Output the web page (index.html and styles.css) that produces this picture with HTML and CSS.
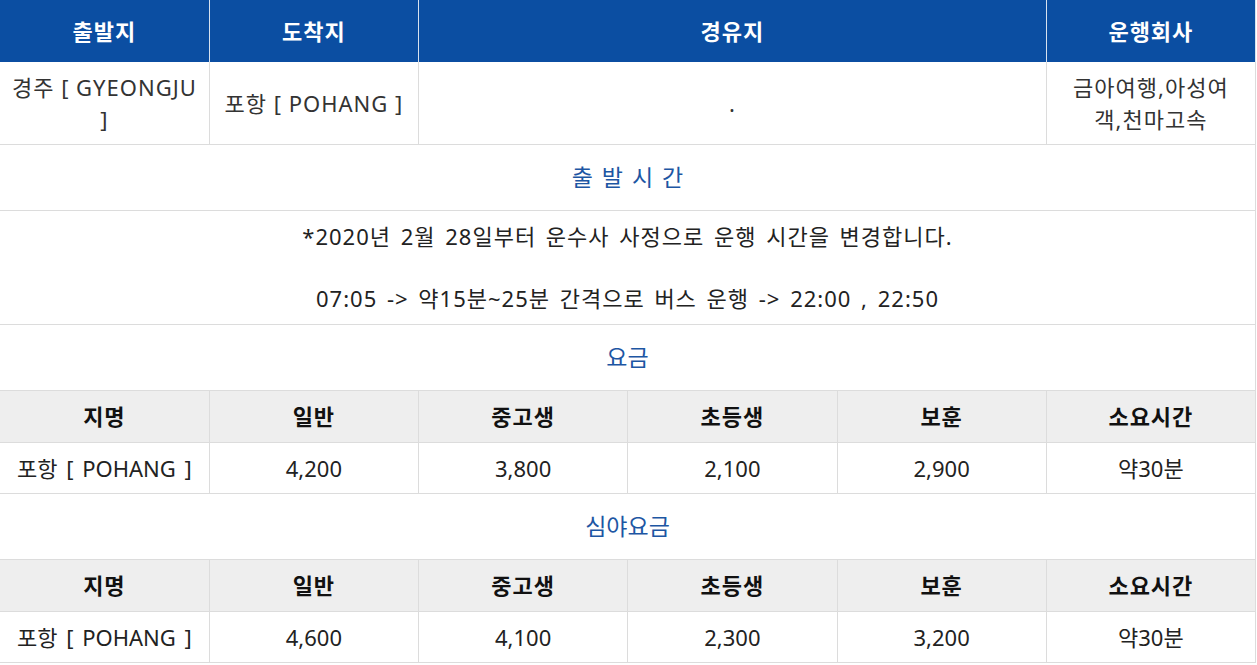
FILE: index.html
```html
<!DOCTYPE html>
<html lang="ko">
<head>
<meta charset="utf-8">
<title>시간표</title>
<link rel="stylesheet" href="styles.css">
</head>
<body>
<table class="tbl">
  <colgroup>
    <col class="c"><col class="c"><col class="c"><col class="c"><col class="c"><col class="c">
  </colgroup>
  <tr class="head">
    <th>출발지</th>
    <th>도착지</th>
    <th colspan="3">경유지</th>
    <th>운행회사</th>
  </tr>
  <tr class="route">
    <td>경주 [ GYEONGJU ]</td>
    <td>포항 [ POHANG ]</td>
    <td colspan="3">.</td>
    <td class="company">금아여행,아성여객,천마고속</td>
  </tr>
  <tr class="section">
    <td colspan="6">출 발 시 간</td>
  </tr>
  <tr class="info">
    <td colspan="6">*2020년 2월 28일부터 운수사 사정으로 운행 시간을 변경합니다.<br><br>07:05 -&gt; 약15분~25분 간격으로 버스 운행 -&gt; 22:00 , 22:50</td>
  </tr>
  <tr class="section">
    <td colspan="6">요금</td>
  </tr>
  <tr class="sub">
    <th>지명</th><th>일반</th><th>중고생</th><th>초등생</th><th>보훈</th><th>소요시간</th>
  </tr>
  <tr class="data">
    <td>포항 [ POHANG ]</td><td>4,200</td><td>3,800</td><td>2,100</td><td>2,900</td><td>약30분</td>
  </tr>
  <tr class="section">
    <td colspan="6">심야요금</td>
  </tr>
  <tr class="sub">
    <th>지명</th><th>일반</th><th>중고생</th><th>초등생</th><th>보훈</th><th>소요시간</th>
  </tr>
  <tr class="data">
    <td>포항 [ POHANG ]</td><td>4,600</td><td>4,100</td><td>2,300</td><td>3,200</td><td>약30분</td>
  </tr>
</table>
</body>
</html>
```

FILE: styles.css
```css
html, body {
  margin: 0;
  padding: 0;
  background: #fff;
}
body {
  font-family: "Noto Sans", "Noto Sans CJK KR", sans-serif;
  font-size: 22px;
  color: #222;
}
.tbl {
  width: 1256px;
  border-collapse: collapse;
  table-layout: fixed;
}
.tbl th,
.tbl td {
  text-align: center;
  vertical-align: middle;
  border-right: 1px solid #dcdcdc;
  border-bottom: 1px solid #dcdcdc;
  padding: 0 6px;
  word-spacing: 3px;
}
.head th {
  background: #0b4ea2;
  color: #fff;
  font-weight: bold;
  height: 62px;
  box-sizing: border-box;
  line-height: 30px;
  padding: 16px 6px;
  letter-spacing: 1px;
  border-bottom: 0;
  border-right: 1px solid #d8e2ef;
}
.route td {
  line-height: 32px;
  padding: 9px 6px;
  letter-spacing: 1px;
  word-spacing: 0;
  color: #333;
}
.route td.company {
  padding: 9px 16px;
}
.section td {
  color: #1d56a3;
  font-size: 23px;
  line-height: 30px;
  padding: 17px 6px 18px;
}
.info td {
  line-height: 31px;
  padding: 10px 6px;
  letter-spacing: 1px;
  color: #222;
}
.sub th {
  background: #eeeeee;
  font-weight: bold;
  line-height: 31px;
  padding: 10px 6px;
  letter-spacing: 1px;
  color: #111;
}
.data td {
  line-height: 30px;
  padding: 10px 6px;
  color: #222;
}
```
